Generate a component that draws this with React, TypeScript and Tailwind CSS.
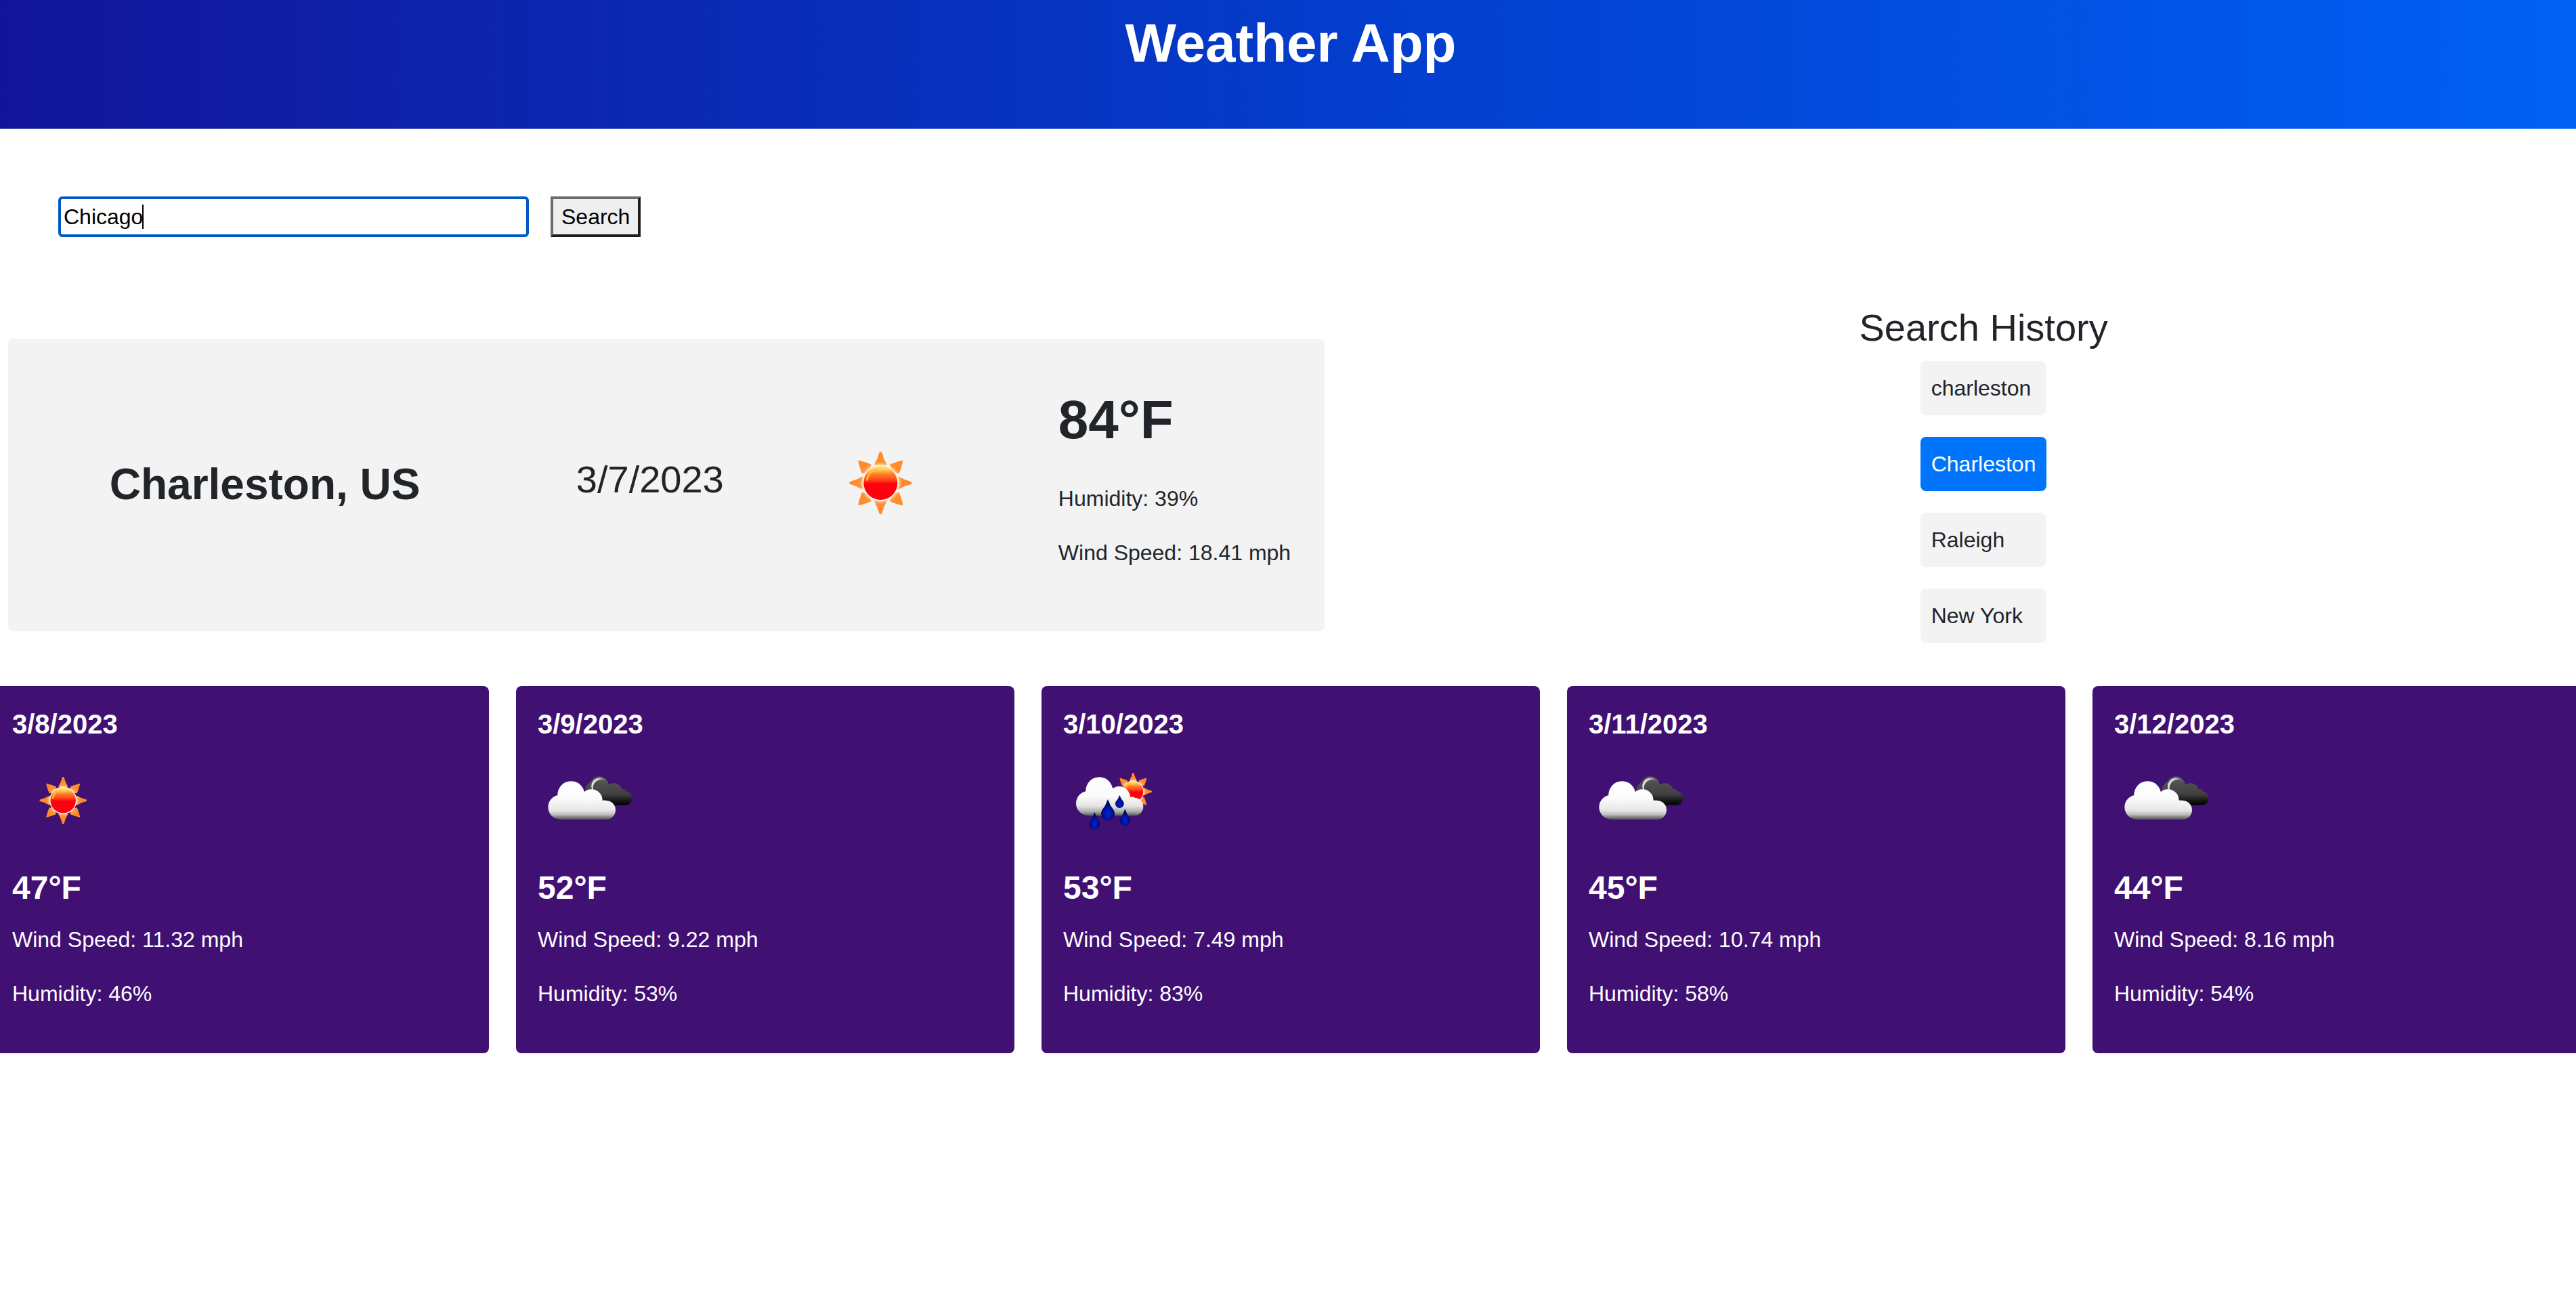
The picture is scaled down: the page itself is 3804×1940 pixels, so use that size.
import { useState } from "react";

type IconName = "sun" | "clouds" | "rain";

const RAY_ANGLES = [0, 90, 180, 270];

function SunShape({ id }: { id: string }) {
  return (
    <g>
      <defs>
        <linearGradient id={`${id}-disk`} x1="0" y1="0" x2="0" y2="1">
          <stop offset="0" stopColor="#ffe98c" />
          <stop offset="0.12" stopColor="#ffc552" />
          <stop offset="0.25" stopColor="#ff7a28" />
          <stop offset="0.4" stopColor="#ff4a18" />
          <stop offset="0.53" stopColor="#ff0010" />
          <stop offset="1" stopColor="#ff0010" />
        </linearGradient>
        <radialGradient id={`${id}-ray`} gradientUnits="userSpaceOnUse" cx="0" cy="0" r="142">
          <stop offset="0.56" stopColor="#ffc98e" />
          <stop offset="0.66" stopColor="#ff8f30" />
          <stop offset="0.9" stopColor="#ff8a26" />
          <stop offset="1" stopColor="#ffa048" />
        </radialGradient>
      </defs>
      <g fill={`url(#${id}-ray)`} stroke={`url(#${id}-ray)`} strokeWidth="5" strokeLinejoin="round">
        {RAY_ANGLES.map((angle) => (
          <g key={angle} transform={`rotate(${angle})`}>
            <path d="M-3 -136 L3 -136 Q9 -108 25 -82 Q0 -70 -25 -82 Q-9 -108 -3 -136Z" />
            <path d="M97 -97 Q90 -66 80 -44 Q50 -50 44 -80 Q66 -90 97 -97Z" />
          </g>
        ))}
      </g>
      <circle r="81" fill="#fff0dc" />
      <circle r="75" fill={`url(#${id}-disk)`} />
      <path d="M-60 -14 Q-54 -50 -20 -60" fill="none" stroke="#ffc62e" strokeWidth="10" strokeLinecap="round" opacity="0.8" />
    </g>
  );
}

function SunIcon({ id, className }: { id: string; className: string }) {
  return (
    <svg viewBox="0 -74 600 600" className={className} role="img" aria-label="Clear sky">
      <g transform="translate(301 217)">
        <SunShape id={id} />
      </g>
    </svg>
  );
}

function CloudsIcon({ id, className }: { id: string; className: string }) {
  return (
    <svg viewBox="102 -3 450 450" className={className} role="img" aria-label="Cloudy">
      <defs>
        <linearGradient id={`${id}-front`} gradientUnits="userSpaceOnUse" x1="0" y1="130" x2="0" y2="302">
          <stop offset="0" stopColor="#ffffff" />
          <stop offset="0.45" stopColor="#fbfbfb" />
          <stop offset="0.75" stopColor="#e6e6e6" />
          <stop offset="0.86" stopColor="#bdbdbd" />
          <stop offset="0.94" stopColor="#777777" />
          <stop offset="1" stopColor="#4a4a4a" />
        </linearGradient>
        <linearGradient id={`${id}-back`} gradientUnits="userSpaceOnUse" x1="0" y1="115" x2="0" y2="236">
          <stop offset="0" stopColor="#585858" />
          <stop offset="0.6" stopColor="#404040" />
          <stop offset="0.85" stopColor="#141414" />
          <stop offset="1" stopColor="#000000" />
        </linearGradient>
        <linearGradient id={`${id}-rim`} x1="0" y1="0" x2="1" y2="0">
          <stop offset="0" stopColor="#ededed" />
          <stop offset="0.45" stopColor="#c4c4c4" />
          <stop offset="0.8" stopColor="#606060" />
        </linearGradient>
      </defs>
      <circle cx="356" cy="170" r="42" fill="#4a4a4a" />
      <circle cx="375" cy="151" r="42" fill="#555555" />
      <circle cx="377" cy="152" r="37" fill={`url(#${id}-rim)`} />
      <g fill={`url(#${id}-back)`}>
        <circle cx="383" cy="160" r="36" />
        <circle cx="440" cy="175" r="36" />
        <circle cx="490" cy="205" r="31" />
        <rect x="350" y="165" width="140" height="71" />
      </g>
      <g fill={`url(#${id}-front)`}>
        <circle cx="202" cy="245" r="54" />
        <circle cx="250" cy="190" r="60" />
        <circle cx="340" cy="215" r="49" />
        <circle cx="405" cy="258" r="42" />
        <rect x="202" y="215" width="203" height="85" />
      </g>
    </svg>
  );
}

const DROPS = [
  { x: 340, tip: 192, r: 19, bottom: 249 },
  { x: 288, tip: 210, r: 30, bottom: 304 },
  { x: 229, tip: 266, r: 23, bottom: 344 },
  { x: 364, tip: 253, r: 23, bottom: 327 },
];

function RainIcon({ id, className }: { id: string; className: string }) {
  return (
    <svg viewBox="90 -3 450 450" className={className} role="img" aria-label="Rain showers">
      <defs>
        <linearGradient id={`${id}-cloud`} gradientUnits="userSpaceOnUse" x1="0" y1="112" x2="0" y2="283">
          <stop offset="0" stopColor="#ffffff" />
          <stop offset="0.5" stopColor="#fafafa" />
          <stop offset="0.75" stopColor="#e4e4e4" />
          <stop offset="0.9" stopColor="#a8a8a8" />
          <stop offset="1" stopColor="#555555" />
        </linearGradient>
        <radialGradient id={`${id}-drop`} cx="0.5" cy="0.68" r="0.5">
          <stop offset="0" stopColor="#001fe0" />
          <stop offset="0.45" stopColor="#0016b0" />
          <stop offset="1" stopColor="#000b52" />
        </radialGradient>
      </defs>
      <g transform="translate(400 176) scale(0.6)">
        <SunShape id={`${id}-sun`} />
      </g>
      <g fill={`url(#${id}-cloud)`}>
        <circle cx="201" cy="228" r="54" />
        <circle cx="250" cy="172" r="60" />
        <circle cx="338" cy="202" r="49" />
        <circle cx="405" cy="243" r="40" />
        <rect x="201" y="200" width="204" height="83" />
      </g>
      {DROPS.map(({ x, tip, r, bottom }) => (
        <path
          key={x}
          fill={`url(#${id}-drop)`}
          d={`M${x} ${tip} Q${x + r * 0.3} ${tip + r * 0.9} ${x + r * 0.87} ${bottom - r * 1.5} A${r} ${r} 0 1 1 ${x - r * 0.87} ${bottom - r * 1.5} Q${x - r * 0.3} ${tip + r * 0.9} ${x} ${tip}Z`}
        />
      ))}
    </svg>
  );
}

const ICONS = { sun: SunIcon, clouds: CloudsIcon, rain: RainIcon };

const FORECAST: { date: string; icon: IconName; temp: number; wind: string; humidity: number }[] = [
  { date: "3/8/2023", icon: "sun", temp: 47, wind: "11.32", humidity: 46 },
  { date: "3/9/2023", icon: "clouds", temp: 52, wind: "9.22", humidity: 53 },
  { date: "3/10/2023", icon: "rain", temp: 53, wind: "7.49", humidity: 83 },
  { date: "3/11/2023", icon: "clouds", temp: 45, wind: "10.74", humidity: 58 },
  { date: "3/12/2023", icon: "clouds", temp: 44, wind: "8.16", humidity: 54 },
];

const HISTORY = ["charleston", "Charleston", "Raleigh", "New York"];

function SearchForm() {
  const [city, setCity] = useState("Chicago");
  return (
    <form className="flex gap-8 px-[86px] py-[100px]" onSubmit={(e) => e.preventDefault()}>
      <div className="relative">
        <input
          type="text"
          aria-label="City"
          value={city}
          onChange={(e) => setCity(e.target.value)}
          className="h-[60px] w-[695px] rounded-md border-4 border-[#005ac8] bg-white px-1 text-black outline-none"
        />
        {/* text cursor */}
        <span className="absolute top-3 left-[124px] h-9 w-0.5 bg-black" />
      </div>
      <button
        type="submit"
        className="h-[60px] border-4 border-t-[#6b6b6b] border-r-[#1c1c1c] border-b-[#1c1c1c] border-l-[#6b6b6b] bg-[#efefef] px-3 leading-[48px] text-black"
      >
        Search
      </button>
    </form>
  );
}

function CurrentWeather() {
  return (
    <section className="mr-[98px] ml-3 grid grid-cols-[39%_19.5%_15.5%_1fr] items-center rounded-lg bg-[#f3f3f3] py-[60px]">
      <h2 className="text-center text-[64px] leading-[77px] font-bold">Charleston, US</h2>
      <h3 className="mb-4 text-center text-[56px] leading-[67px]">3/7/2023</h3>
      <SunIcon id="current" className="size-[200px] justify-self-center" />
      <div className="mr-[50px] justify-self-end">
        <p className="mb-8 text-[80px] leading-[120px] font-bold">84°F</p>
        <p className="mb-8">Humidity: 39%</p>
        <p className="mb-8">Wind Speed: 18.41 mph</p>
      </div>
    </section>
  );
}

function SearchHistory() {
  const [active, setActive] = useState(1);
  return (
    <section className="flex flex-col items-center">
      <h3 className="mb-4 text-[56px] leading-[67px]">Search History</h3>
      <ul className="flex flex-col">
        {HISTORY.map((name, i) => (
          <li key={name} className="mb-8">
            <button
              type="button"
              onClick={() => setActive(i)}
              className={
                i === active
                  ? "block w-full rounded-lg bg-[#0075fb] p-4 text-left text-white"
                  : "block w-full rounded-lg bg-[#f3f3f3] p-4 text-left"
              }
            >
              {name}
            </button>
          </li>
        ))}
      </ul>
    </section>
  );
}

export default function App() {
  return (
    <div className="min-h-screen overflow-hidden bg-white font-['Liberation_Sans',Arial,sans-serif] text-[32px] leading-[48px] text-[#212529]">
      <header className="bg-[linear-gradient(to_right,#12159a,#043bca,#0061f5)] pt-4 pb-[78px] pl-2">
        <h1 className="text-center text-[80px] leading-[96px] font-bold text-white">Weather App</h1>
      </header>
      <SearchForm />
      <main>
        <div className="mb-8 grid grid-cols-[54%_46%] items-center">
          <CurrentWeather />
          <SearchHistory />
        </div>
        <div className="mr-[-22px] ml-[-14px] grid grid-cols-5 gap-10">
          {FORECAST.map((day, i) => {
            const Icon = ICONS[day.icon];
            return (
              <article key={day.date} className="rounded-lg bg-[#401072] p-8 text-white">
                <h5 className="mb-4 text-[40px] leading-[48px] font-bold">{day.date}</h5>
                <Icon id={`day-${i}`} className="mb-4 size-[150px]" />
                <p className="mb-4 text-[48px] leading-[72px] font-bold">{day.temp}°F</p>
                <p className="mb-8">Wind Speed: {day.wind} mph</p>
                <p className="mb-8">Humidity: {day.humidity}%</p>
              </article>
            );
          })}
        </div>
      </main>
    </div>
  );
}
